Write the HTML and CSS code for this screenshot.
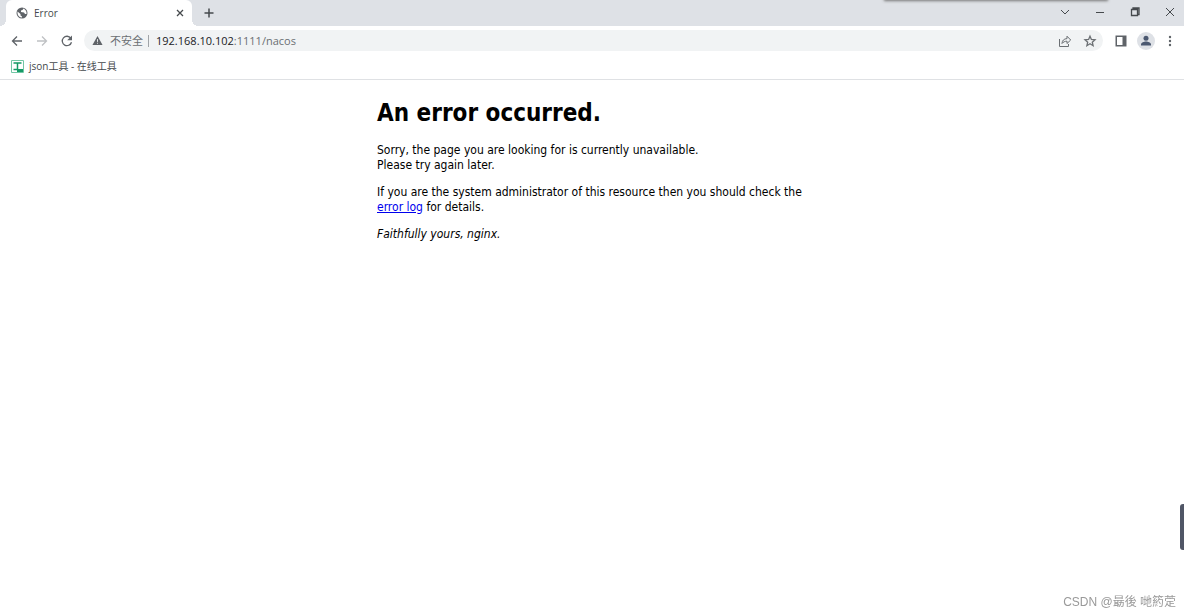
FILE: index.html
```
<!DOCTYPE html>
<html lang="zh-CN">
<head>
<meta charset="utf-8">
<meta name="viewport" content="width=device-width, initial-scale=1">
<title>Error</title>
<link rel="stylesheet" href="styles.css">
</head>
<body>
<header class="browser">
  <div class="tabstrip">
    <div class="tab">
      <svg class="icon-globe" viewBox="0 0 24 24" aria-hidden="true"><circle cx="12" cy="12" r="11" fill="#5f6368"/><path fill="#fff" d="M3 9l6 5v3l3 2v2C7 21 3 17 3 12zM15 3l-2 3-3 1v3l6 1 2 3h3c1-5-2-9-6-11z"/></svg>
      <span class="tab-title">Error</span>
      <button class="plain tab-close" aria-label="关闭"><svg viewBox="0 0 12 12"><path d="M3 3l6 6M9 3l-6 6"/></svg></button>
    </div>
    <button class="plain new-tab" aria-label="新标签页"><svg viewBox="0 0 12 12"><path d="M6 1.500v9M1.500 6h9"/></svg></button>
    <div class="window-controls">
      <button class="plain" aria-label="搜索标签页"><svg viewBox="0 0 12 12"><path d="M2 4l4 4 4-4"/></svg></button>
      <button class="plain" aria-label="最小化"><svg viewBox="0 0 12 12"><path d="M2 6.500h8"/></svg></button>
      <button class="plain" aria-label="还原"><svg viewBox="0 0 12 12"><path stroke-width="1.300" d="M2.500 3.500h6v6h-6zM4 3V2h6v6.500H9"/></svg></button>
      <button class="plain" aria-label="关闭窗口"><svg viewBox="0 0 12 12"><path d="M2 2l8 8M10 2l-8 8"/></svg></button>
    </div>
    <div class="shade"></div>
  </div>
  <div class="toolbar">
    <button class="plain nav" aria-label="后退"><svg viewBox="0 0 12 12"><path d="M11 6H1.500M6 1.500L1.500 6 6 10.500"/></svg></button>
    <button class="plain nav" aria-label="前进" disabled><svg viewBox="0 0 12 12"><path d="M1 6h9.500M6 1.500L10.500 6 6 10.500"/></svg></button>
    <button class="plain nav" aria-label="重新加载"><svg viewBox="0 0 12 12"><path d="M10.500 7.200A4.700 4.700 0 1 1 9.800 3.200"/><path class="solid" d="M11 .5v4.800H6.200z"/></svg></button>
    <div class="omnibox">
      <svg class="icon-warning" viewBox="0 0 12 12" aria-hidden="true"><path fill="#5f6368" d="M6 1l5.500 10H.5z"/><path stroke="#f1f3f4" d="M6 4.500v3M6 8.500v1"/></svg>
      <span class="security">不安全</span>
      <span class="divider"></span>
      <span class="address" role="textbox" aria-label="地址"><span class="host">192.168.10.102</span>:1111/nacos</span>
      <button class="plain action" aria-label="分享"><svg viewBox="0 0 14 14"><path d="M1.500 5v7.500h9V10M4 9.500c.2-3 1.800-4.700 5-4.900V2.200L12.700 6 9 9.500V7.200C6.800 7.200 5.200 8 4 9.500z"/></svg></button>
      <button class="plain action" aria-label="收藏"><svg viewBox="0 0 14 14"><path class="bold" d="M7 2.200l1.400 3.300 3.600.3-2.700 2.400.8 3.500L7 9.800l-3.100 1.900.8-3.500L2 5.800l3.600-.3z"/></svg></button>
    </div>
    <button class="plain panel" aria-label="侧边栏"><svg viewBox="0 0 12 12"><path fill="#5f6368" d="M.5 .5h11v11H.5z"/><path fill="#fff" d="M2 2h5.500v8H2z"/></svg></button>
    <button class="plain profile" aria-label="个人资料"><svg viewBox="0 0 18 18"><circle cx="9" cy="9" r="9" fill="#dee1e6"/><circle cx="9" cy="6.300" r="2.500" fill="#4b5870"/><path fill="#4b5870" d="M4 13.500v-1c0-2 3-3 5-3s5 1 5 3v1z"/></svg></button>
    <button class="plain more" aria-label="菜单"><svg viewBox="0 0 12 12"><g fill="#5f6368"><circle cx="6" cy="2" r="1.200"/><circle cx="6" cy="6" r="1.200"/><circle cx="6" cy="10" r="1.200"/></g></svg></button>
  </div>
  <nav class="bookmarks">
    <a href="#" class="bookmark"><svg viewBox="0 0 13 13" aria-hidden="true"><path fill="#fff" stroke="#72c6a5" d="M.5.500h12v12H.5z"/><path fill="none" stroke="#159a66" stroke-width="1.500" d="M2.500 3h8M6.500 3v6M2.500 9.500H7"/><path fill="#159a66" d="M6 9h6v3H6z"/></svg><span>json工具 - 在线工具</span></a>
  </nav>
</header>
<main class="page">
  <h1>An error occurred.</h1>
  <p>Sorry, the page you are looking for is currently unavailable.<br>Please try again later.</p>
  <p>If you are the system administrator of this resource then you should check the <a href="#">error log</a> for details.</p>
  <p><em>Faithfully yours, nginx.</em></p>
</main>
<div class="side-handle"></div>
<div class="watermark">CSDN @朂後 哋箹萣</div>
</body>
</html>
```
FILE: styles.css
```
* { box-sizing: border-box; }
body {
  margin: 0;
  min-height: 100vh;
  background: #fff;
  color: #000;
  font-family: "DejaVu Sans Condensed", "Noto Sans", sans-serif;
}
.browser {
  border-bottom: 1px solid #dfe1e4;
  font: 10px/16px "Open Sans", "Noto Sans CJK SC", sans-serif;
  color: #45494d;
}
.plain {
  display: flex;
  align-items: center;
  justify-content: center;
  flex: none;
  margin: 0;
  padding: 0;
  border: 0;
  background: none;
}
.plain svg {
  width: 12px;
  height: 12px;
  fill: none;
  stroke: #45494d;
}
.tabstrip {
  position: relative;
  display: flex;
  height: 26px;
  padding-left: 6px;
  background: #dee1e6;
}
.tab {
  position: relative;
  display: flex;
  align-items: center;
  width: 186px;
  padding: 0 6px 0 10px;
  border-radius: 6px 6px 0 0;
  background: #fff;
}
.tab::before,
.tab::after {
  content: "";
  position: absolute;
  bottom: 0;
  width: 6px;
  height: 6px;
}
.tab::before {
  right: 100%;
  background: radial-gradient(circle at 0 0, #dee1e6 6px, #fff 6px);
}
.tab::after {
  left: 100%;
  background: radial-gradient(circle at 100% 0, #dee1e6 6px, #fff 6px);
}
.icon-globe { width: 12px; height: 12px; }
.tab-title { flex: 1; margin-left: 6px; }
.tab-close svg { stroke-width: 1.300; }
.new-tab { width: 34px; }
.new-tab svg { stroke-width: 1.500; }
.window-controls { display: flex; margin-left: auto; }
.window-controls .plain { width: 35px; height: 24px; }
.window-controls .plain:last-child { width: 36px; margin-right: -4px; }
.tabstrip { overflow-x: clip; }
.shade {
  position: absolute;
  top: -4px;
  right: 76px;
  width: 224px;
  height: 4px;
  box-shadow: 0 1px 3px #777;
}
.toolbar {
  display: flex;
  align-items: center;
  height: 29px;
  padding: 0 2px 0 4px;
}
.nav { width: 25px; height: 24px; }
.nav svg { stroke: #5f6368; stroke-width: 1.300; }
.nav:disabled svg { stroke: #bfc1c4; }
.nav .solid { fill: #5f6368; stroke: none; }
.omnibox {
  flex: 1;
  display: flex;
  align-items: center;
  height: 21px;
  margin-left: 5px;
  padding: 0 1px 0 8px;
  border-radius: 11px;
  background: #f1f3f4;
  color: #6b6f73;
  font-size: 11px;
}
.icon-warning { width: 11px; height: 11px; }
.security { margin-left: 7px; }
.divider { width: 1px; height: 12px; margin: 0 7px 0 5px; background: #a0a4a8; }
.address { flex: 1; }
.host { color: #202124; }
.action { width: 25px; }
.action svg { width: 14px; height: 14px; stroke: #6b6f73; }
.action .bold { stroke-width: 1.300; }
.panel { width: 25px; margin-left: 5px; }
.panel svg, .profile svg, .more svg { stroke: none; }
.profile { width: 25px; }
.profile svg { width: 18px; height: 18px; }
.more { width: 24px; }
.bookmarks { display: flex; align-items: center; height: 24px; padding: 0 11px 2px; }
.bookmark { display: flex; align-items: center; gap: 5px; color: inherit; text-decoration: none; }
.bookmark svg { width: 13px; height: 13px; }
.page { max-width: 430px; margin: 0 auto; font-size: 12px; line-height: 15px; }
h1 { margin: 17px 0 14px; font-size: 24px; line-height: 32px; }
p { margin: 0 0 12px; }
.page a { color: #00e; }
.side-handle {
  position: fixed;
  right: 0;
  bottom: 64px;
  width: 4px;
  height: 46px;
  border-radius: 3px 0 0 3px;
  background: #505666;
}
.watermark {
  position: fixed;
  right: 8px;
  bottom: 4px;
  color: #999;
  font: 12px/16px "Liberation Sans", "Noto Sans CJK SC", sans-serif;
}
```
